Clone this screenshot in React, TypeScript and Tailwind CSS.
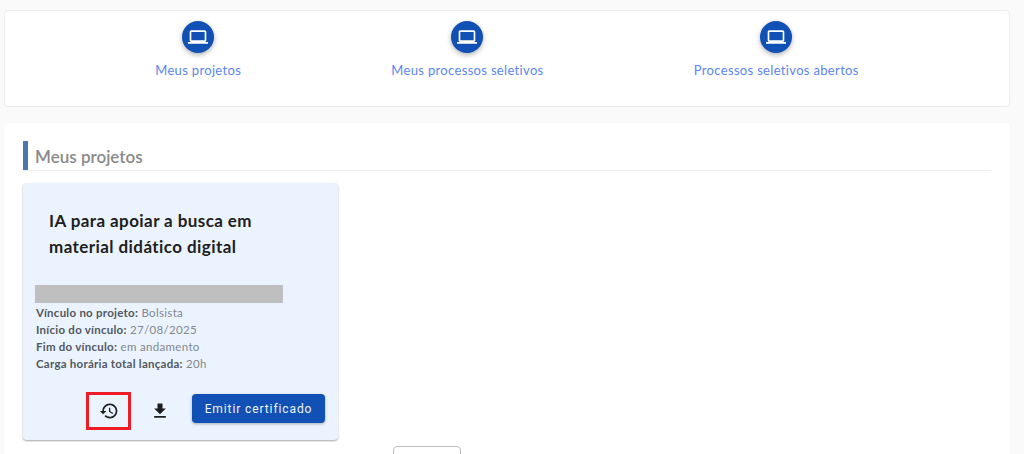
const laptop = "M20 18c1.1 0 1.99-.9 1.99-2L22 6c0-1.1-.9-2-2-2H4c-1.1 0-2 .9-2 2v10c0 1.1.9 2 2 2H0v2h24v-2h-4zM4 6h16v10H4V6z";
const history = "M13 3c-4.97 0-9 4.03-9 9H1l3.89 3.89.07.14L9 12H6c0-3.87 3.13-7 7-7s7 3.13 7 7-3.13 7-7 7c-1.93 0-3.68-.79-4.94-2.06l-1.42 1.42C8.27 19.99 10.51 21 13 21c4.97 0 9-4.03 9-9s-4.03-9-9-9zm-1 5v5l4.28 2.54.72-1.21-3.5-2.08V8H12z";
const download = "M19 9h-4V3H9v6H5l7 7 7-7zM5 18v2h14v-2H5z";

function Icon({ d, className }: { d: string; className: string }) {
  return (
    <svg viewBox="0 0 24 24" className={className} fill="currentColor">
      <path d={d} />
    </svg>
  );
}

function Nav({ label }: { label: string }) {
  return (
    <div className="flex flex-col items-center">
      <div className="w-8 h-8 rounded-full bg-[#1150b4] text-white flex items-center justify-center shadow-[0_2px_5px_rgba(0,0,0,0.3)]">
        <Icon d={laptop} className="w-5 h-5" />
      </div>
      <span className="mt-2 text-[13px] leading-[18px] tracking-[0.33px] text-[#5b86ee]">{label}</span>
    </div>
  );
}

function Line({ k, v }: { k: string; v: string }) {
  return (
    <div className="h-[17px] leading-[17px] text-[11.5px] tracking-[0.33px] text-[#82888e] whitespace-nowrap">
      <b className="font-bold tracking-[0.25px] text-[#52595f]">{k}:</b> {v}
    </div>
  );
}

export default function App() {
  return (
    <div className="h-[454px] overflow-hidden bg-[#fafafa] pt-[10px] pl-1 pr-[14px] font-['Lato','Noto_Sans',sans-serif]">
      <div className="h-[97px] bg-white border border-[#eeeeee] rounded pt-[10px] flex justify-evenly">
        <Nav label="Meus projetos" />
        <Nav label="Meus processos seletivos" />
        <Nav label="Processos seletivos abertos" />
      </div>

      <div className="mt-4 bg-white rounded h-[400px] pt-[18px] px-[19px] shadow-[0_0_2px_rgba(0,0,0,0.06)]">
        <div className="h-[30px] border-b border-[#eeeef2] flex">
          <div className="w-[5px] bg-[#4a76b4]" />
          <h2 className="ml-[7px] pt-px text-[17px] leading-[30px] font-semibold text-[#8a8a8a]">Meus projetos</h2>
        </div>

        <div className="mt-3 w-[315px] h-[257px] bg-[#ebf3ff] rounded shadow-[0_1px_2px_rgba(0,0,0,0.35)] pt-[25px]">
          <h3 className="ml-[26px] text-[17px] leading-[26px] tracking-[0.42px] font-bold text-[#212121]">
            IA para apoiar a busca em
            <br />
            material didático digital
          </h3>
          <div className="mt-[25px] ml-3 w-[248px] h-[18px] bg-[#bfbfbf]" />
          <div className="mt-[1px] ml-[13px]">
            <Line k="Vínculo no projeto" v="Bolsista" />
            <Line k="Início do vínculo" v="27/08/2025" />
            <Line k="Fim do vínculo" v="em andamento" />
            <Line k="Carga horária total lançada" v="20h" />
          </div>
          <div className="mt-5 flex items-center">
            <div className="ml-[63px] w-[45px] h-[38px] border-[3px] border-[#ee1c25] flex items-center justify-center text-[#1e1e1e]">
              <Icon d={history} className="w-5 h-5" />
            </div>
            <div className="ml-[19px] text-[#1e1e1e] flex">
              <Icon d={download} className="w-5 h-5" />
            </div>
            <button className="ml-[22px] mb-[5px] w-[133px] h-[29px] bg-[#1150b4] text-[#f2f5fb] rounded text-[12px] font-normal tracking-[0.9px] font-['Roboto',sans-serif] shadow-[0_1px_3px_rgba(0,0,0,0.3)]">
              Emitir certificado
            </button>
          </div>
        </div>

        <div className="mt-[6px] ml-[370px] w-[68px] h-10 bg-white border border-[#bdbdbd] rounded" />
      </div>
    </div>
  );
}
